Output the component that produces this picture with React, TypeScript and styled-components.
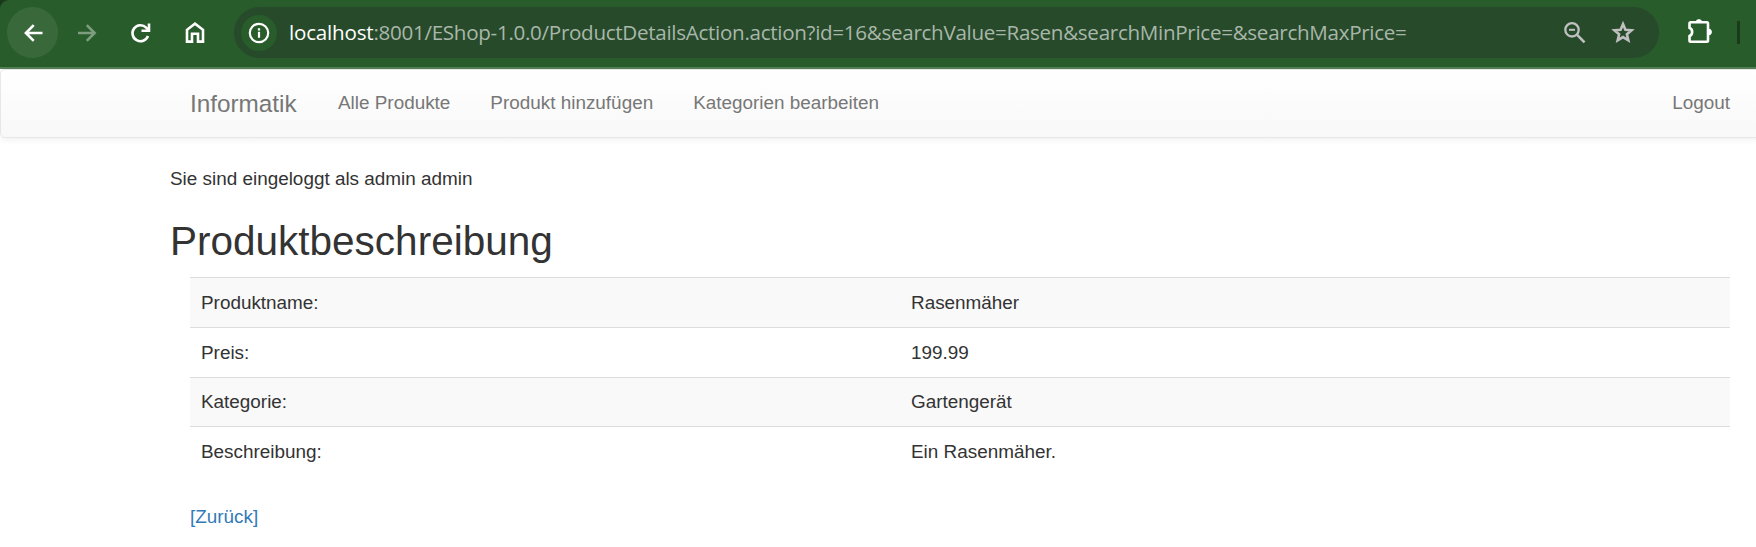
import React from 'react';
import styled, { createGlobalStyle } from 'styled-components';

const GlobalStyle = createGlobalStyle`
  * { box-sizing: border-box; }
  html { background: #fff; }
  body {
    margin: 0;
    overflow: hidden;
    color: #333;
    font: 18.9px/27px "Liberation Sans", Arial, sans-serif;
  }
`;

const Screen = styled.div`
  width: 1756px;
  height: 547px;
  overflow: hidden;
  background: #fff;
`;

const ToolbarFrame = styled.div`
  background: #1a3a1c;
`;

const Toolbar = styled.div`
  height: 69px;
  display: flex;
  align-items: flex-start;
  padding: 7px 0 0 7px;
  background: #285c2b;
  border-bottom: 2px solid #568058;
  border-top-left-radius: 9px;
`;

const IconButton = styled.button<{ $active?: boolean; $muted?: boolean }>`
  width: 51px;
  height: 51px;
  margin: 0 3px 0 0;
  padding: 0;
  border: 0;
  border-radius: 50%;
  display: grid;
  place-items: center;
  background: ${(p) => (p.$active ? '#39693b' : 'transparent')};
  color: ${(p) => (p.$muted ? '#7e9d80' : '#fff')};
`;

const AddressBar = styled.div`
  width: 1425px;
  height: 51px;
  margin-left: 11px;
  padding: 0 21px 0 7px;
  display: flex;
  align-items: center;
  border-radius: 26px;
  background: #274a2a;
  color: #c0c0c0;
`;

const SiteInfo = styled.span`
  width: 36px;
  height: 36px;
  display: grid;
  place-items: center;
  border-radius: 50%;
  background: #285c2b;
  color: #fff;
`;

const Url = styled.span`
  flex: 1;
  margin: 0 0 2px 12px;
  font: 20.6px/30px "Open Sans", "Noto Sans", sans-serif;
  letter-spacing: -0.3px;
  white-space: nowrap;
  color: #a9b7aa;
`;

const Host = styled.span`
  letter-spacing: -0.2px;
  color: #fff;
`;

const BarIcon = styled.span`
  display: grid;
  margin-left: 18px;
`;

const Extensions = styled.span`
  display: grid;
  margin: 10px 0 0 25px;
  color: #fff;
`;

const Divider = styled.span`
  width: 3px;
  height: 23px;
  margin: 14px 0 0 23px;
  background: #1a3a1c;
`;

const Navbar = styled.nav`
  width: 1780px;
  height: 69px;
  display: flex;
  align-items: flex-start;
  padding: 19px 49px 0 189px;
  border: 1px solid #e7e7e7;
  border-radius: 5px;
  background: linear-gradient(#fff, #f8f8f8);
  box-shadow: 0 1px 7px rgba(0, 0, 0, 0.075);
  color: #777;
`;

const Brand = styled.a`
  width: 148px;
  font-size: 24.3px;
  line-height: 30px;
`;

const NavLink = styled.a`
  margin-right: 40px;
`;

const Logout = styled.a`
  margin-left: auto;
`;

const Content = styled.main`
  padding: 27px 26px 0 170px;
`;

const Status = styled.p`
  margin: 0;
`;

const Title = styled.h1`
  margin: 27px 0 0;
  height: 58px;
  font-size: 40.5px;
  font-weight: 400;
  line-height: 44px;
`;

const Details = styled.div`
  margin-left: 20px;
`;

const Row = styled.div<{ $striped?: boolean; $compact?: boolean }>`
  display: grid;
  grid-template-columns: 710px 1fr;
  height: ${(p) => (p.$compact ? 49 : 50)}px;
  padding: ${(p) => (p.$compact ? 10 : 11)}px 11px 0;
  border-top: 1px solid #ddd;
  background: ${(p) => (p.$striped ? '#f9f9f9' : '#fff')};
`;

const BackLink = styled.a`
  display: inline-block;
  margin-top: 27px;
  color: #337ab7;
`;

const Icon = ({ children }: { children: React.ReactNode }) => (
  <svg width="30" height="30" viewBox="0 0 30 30" fill="none" stroke="currentColor" strokeWidth="2.6">
    {children}
  </svg>
);

const rows = [
  { label: 'Produktname:', value: 'Rasenmäher' },
  { label: 'Preis:', value: '199.99' },
  { label: 'Kategorie:', value: 'Gartengerät', compact: true },
  { label: 'Beschreibung:', value: 'Ein Rasenmäher.' },
];

export default function App() {
  return (
    <Screen>
      <GlobalStyle />
      <ToolbarFrame>
        <Toolbar>
          <IconButton $active aria-label="Zurück">
            <Icon><path d="M15.700 7.200 7.900 15l7.800 7.800M8 15h16.500" /></Icon>
          </IconButton>
          <IconButton $muted aria-label="Vorwärts">
            <Icon><path d="m14.800 7.200 7.800 7.800-7.800 7.800M22.500 15H6" /></Icon>
          </IconButton>
          <IconButton aria-label="Neu laden">
            <Icon>
              <path d="M22 18a8 8 0 1 1-1.800-8.400l2.500 2.800" />
              <path d="M23 5.500v7.200h-7.500" />
            </Icon>
          </IconButton>
          <IconButton aria-label="Startseite">
            <Icon><path d="M7 23.600V11.800l8-6.200 8 6.200v11.800h-5v-7.800h-6v7.800z" /></Icon>
          </IconButton>
          <AddressBar>
            <SiteInfo>
              <Icon>
                <circle cx="15" cy="15" r="9.200" strokeWidth="2.200" />
                <path d="M15 13.700v6M15 10.200v2.200" strokeWidth="2.200" />
              </Icon>
            </SiteInfo>
            <Url><Host>localhost</Host>:8001/EShop-1.0.0/ProductDetailsAction.action?id=16&amp;searchValue=Rasen&amp;searchMinPrice=&amp;searchMaxPrice=</Url>
            <BarIcon>
              <Icon>
                <circle cx="12" cy="11.800" r="6.700" strokeWidth="2.300" />
                <path d="m16.900 16.700 7.600 7.600" />
                <path d="M9 11.800h6" strokeWidth="2" />
              </Icon>
            </BarIcon>
            <BarIcon>
              <Icon>
                <path d="m15 6 2.400 5.700 6.200.5-4.700 4.100 1.400 6-5.300-3.200-5.300 3.200 1.400-6-4.700-4.100 6.200-.5z" strokeWidth="2.600" />
              </Icon>
            </BarIcon>
          </AddressBar>
          <Extensions>
            <Icon>
              <path d="M5.500 6.400q0-1.200 1.200-1.200h16.100q1.200 0 1.200 1.200v17.100q0 1.200-1.200 1.200H6.700q-1.200 0-1.200-1.200v-4.500a4.500 4.500 0 0 0 0-8.200z" />
              <path d="M11.800 5a3.200 3.200 0 0 1 6.200 0zM24.500 12a3 3 0 0 1 0 6z" fill="currentColor" strokeWidth=".8" />
            </Icon>
          </Extensions>
          <Divider />
        </Toolbar>
      </ToolbarFrame>
      <Navbar>
        <Brand>Informatik</Brand>
        <NavLink>Alle Produkte</NavLink>
        <NavLink>Produkt hinzufügen</NavLink>
        <NavLink>Kategorien bearbeiten</NavLink>
        <Logout>Logout</Logout>
      </Navbar>
      <Content>
        <Status>Sie sind eingeloggt als admin admin</Status>
        <Title>Produktbeschreibung</Title>
        <Details>
          {rows.map((row, i) => (
            <Row key={row.label} $striped={i % 2 === 0} $compact={row.compact}>
              <span>{row.label}</span>
              <span>{row.value}</span>
            </Row>
          ))}
          <BackLink>[Zurück]</BackLink>
        </Details>
      </Content>
    </Screen>
  );
}
